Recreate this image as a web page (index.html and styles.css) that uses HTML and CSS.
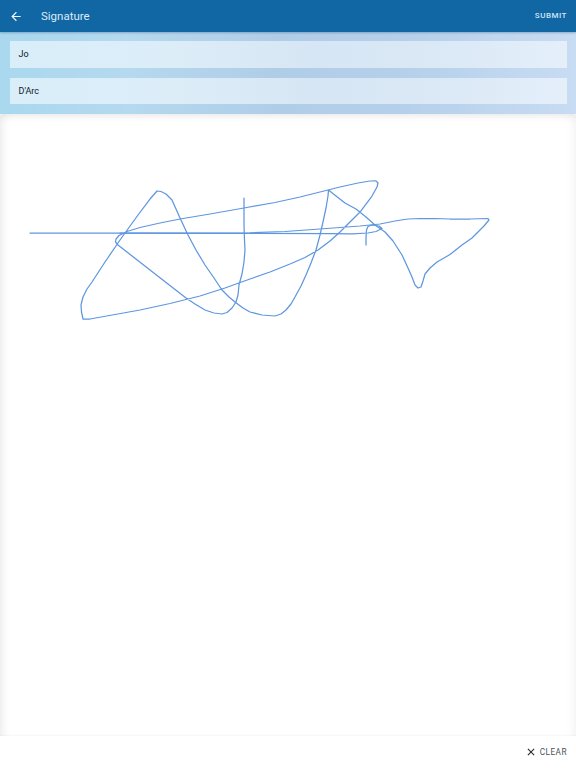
FILE: index.html
```html
<!DOCTYPE html>
<html lang="en">
<head>
<meta charset="utf-8">
<title>Signature</title>
<link rel="stylesheet" href="styles.css">
</head>
<body>
<div class="app">
  <header class="appbar">
    <button class="back" aria-label="Back">
      <svg class="back-icon" viewBox="0 0 24 24"><path d="M20 11H7.83l5.59-5.59L12 4l-8 8 8 8 1.41-1.41L7.83 13H20z"/></svg>
    </button>
    <h1 class="title">Signature</h1>
    <span class="submit">SUBMIT</span>
  </header>
  <section class="form">
    <div class="field">Jo</div>
    <div class="field">D'Arc</div>
  </section>
  <main class="pad">
    <svg class="ink" viewBox="0 0 576 622" preserveAspectRatio="none">
      <g transform="translate(0 -114)">
        <path d="M30 233 L120 233 L250 233.300 L330 233.500 L352 233.800 L368 233 L376 231.500 L382 228.500 L379 226 L372 225 L368 226.500 L366.500 230 L366 238 L366 245"/>
        <path d="M244 198 L244 225 L244.500 240 L245 250 L244 262 L242 274 L239 285 L238 295 L236 302 L232 308 L227 312.500 L222 314 L214 313 L205 310 L195 304 L186 298 L168 284 L150 270 L134 257.500 L118 245 L115.500 242 L116 239 L119 235.500 L127 231.500 L140 227.500 L160 223 L180 219 L210 214 L244 208 L275 202.500 L300 197 L320 192 L340 187 L358 183 L370 181 L376 180.800 L378 183 L377 187 L372 196 L360 212 L350 222 L340 232 L330 241 L318 250 L305 257.500 L290 264 L270 272 L250 279 L225 288 L200 296 L170 303.500 L140 310 L115 314.500 L90 319 L83 319 L81.500 312 L81 305 L83 297 L87 289 L92 282 L105 262 L120 240 L138 215 L150 199 L157 191 L161 191.500 L166 194 L172 200 L176 209 L180 218 L188 235 L196 250 L205 265 L214 278 L222 290 L229 297 L235 302 L243 308 L250 312 L262 315 L275 316 L281 314 L286 310 L291 304 L295 297 L301 286 L306 275 L311 263 L316 250 L320 235 L323 222 L326 208 L328 196 L328.500 190 L336 196 L345 203 L356 209 L366 217 L375 225 L385 232 L393 241 L402 255 L408 268 L412 277 L415 285 L418 288 L421 287 L423 281 L425 274 L430 268 L437 262 L450 254.500 L462 245 L472 238 L478 232 L484 226 L489 220 L488 218.500 L470 219 L450 219 L435 218.500 L420 218.500 L408 219 L395 221 L380 224 L360 226 L320 229 L285 231.500 L250 232.800 L200 233 L120 233"/>
      </g>
    </svg>
  </main>
  <footer class="actions">
    <span class="clear">
      <svg class="clear-icon" viewBox="0 0 24 24"><path d="M19 6.410 17.590 5 12 10.590 6.410 5 5 6.410 10.590 12 5 17.590 6.410 19 12 13.410 17.590 19 19 17.590 13.410 12z"/></svg>
      CLEAR
    </span>
  </footer>
</div>
</body>
</html>
```
FILE: styles.css
```css
* { box-sizing: border-box; }
html, body { margin: 0; height: 100%; }
body {
  font-family: Roboto, "Liberation Sans", sans-serif;
  background: #fff;
}
.app {
  width: 576px;
  height: 768px;
  display: flex;
  flex-direction: column;
  overflow: hidden;
}
.appbar {
  height: 32px;
  flex: none;
  display: flex;
  align-items: center;
  background: #1166a4;
  color: #dcebf7;
  padding: 0 9px;
  box-shadow: 0 1px 2px rgba(10, 60, 110, .3);
  position: relative;
}
.back {
  width: 14px;
  height: 14px;
  padding: 0;
  border: 0;
  background: none;
  display: flex;
}
.back-icon { width: 15px; height: 15px; fill: #f2f8fd; }
.title {
  margin: 0 0 0 18px;
  font-size: 11.500px;
  font-weight: 400;
  flex: 1;
}
.submit {
  font-size: 8px;
  font-weight: 500;
  letter-spacing: .5px;
  margin-top: -1px;
  color: #d3e5f4;
}
.form {
  height: 82px;
  flex: none;
  padding: 9px 9px 10px 9.500px;
  display: flex;
  flex-direction: column;
  gap: 10px;
  background: linear-gradient(90deg, #a9d8ef 0%, #b5d9ee 22%, #b0cde8 48%, #b4cfea 68%, #bed6ee 85%, #c8dcf3 100%);
}
.field {
  flex: 1;
  display: flex;
  align-items: center;
  padding-left: 9px;
  font-size: 9px;
  color: #10181f;
  background: linear-gradient(90deg, #d9eef9 0%, #dcedf8 30%, #d6e6f4 55%, #dce9f6 80%, #e4effa 100%);
}
.pad {
  flex: 1;
  min-height: 0;
  background: #fff;
  border-radius: 2px 2px 0 0;
  box-shadow: inset 10px 8px 10px -8px rgba(0, 0, 0, .09), inset -10px 8px 10px -8px rgba(0, 0, 0, .06);
}
.ink {
  display: block;
  width: 576px;
  height: 622px;
  filter: blur(.3px);
}
.ink path {
  fill: none;
  stroke: #5f96e0;
  stroke-width: 1.250px;
  stroke-linecap: round;
  stroke-linejoin: round;
}
.actions {
  height: 32px;
  flex: none;
  display: flex;
  align-items: center;
  justify-content: flex-end;
  padding: 0 9px 0 0;
  background: #fff;
  box-shadow: 0 -1px 2px rgba(0, 0, 0, .04);
  position: relative;
}
.clear {
  display: flex;
  align-items: center;
  gap: 3px;
  font-size: 8.200px;
  letter-spacing: .5px;
  color: #4d5156;
}
.clear-icon { width: 12px; height: 12px; fill: #222; }
```
